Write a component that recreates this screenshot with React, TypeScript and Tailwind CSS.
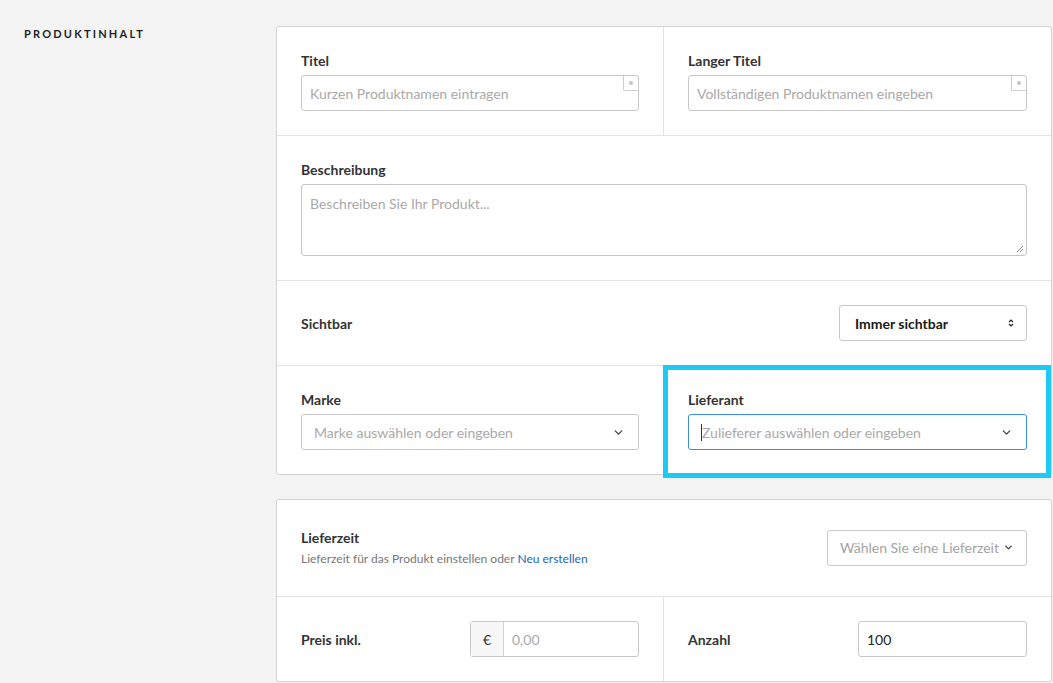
import { ChevronDown } from 'lucide-react';

function Label({ children }: { children: React.ReactNode }) {
  return <div className="text-[14px] leading-5 font-bold text-[#333] mb-[4px] pt-px">{children}</div>;
}

function TextInput({ placeholder }: { placeholder: string }) {
  return (
    <div className="relative h-9 border border-[#c8c8c8] rounded-[3px] bg-white flex items-center pl-[8px]">
      <span className="text-[14px] text-[#a9a9a9]">{placeholder}</span>
      {/* little field badge */}
      <div className="absolute top-0 right-0 w-[15px] h-[15px] border-l border-b border-[#cfcfcf] rounded-bl-[2px] flex items-center justify-center">
        <div className="w-[4px] h-[4px] rounded-full bg-[#c4c4c4]" />
      </div>
    </div>
  );
}

function Combo({ placeholder, active }: { placeholder: string; active?: boolean }) {
  return (
    <div
      className={
        active
          ? 'h-9 border border-[#3d8fd8] rounded-[3px] bg-white flex items-center pl-[12px] pr-[13px]'
          : 'h-9 border border-[#c8c8c8] rounded-[3px] bg-white flex items-center pl-[12px] pr-[13px]'
      }
    >
      {active && <span className="w-px h-[17px] bg-[#333]" />}
      <span className="flex-1 text-[14px] text-[#a9a9a9]">{placeholder}</span>
      <ChevronDown className="w-[13px] h-[13px] text-[#444]" strokeWidth={2.5} />
    </div>
  );
}

export default function App() {
  return (
    <div className="min-h-[683px] bg-[#f3f3f3] font-['Lato','Open_Sans',sans-serif] text-[#333]">
      <div className="flex pt-[26px]">
        {/* Section label */}
        <div className="w-[276px] pl-[24px]">
          <div className="text-[11px] leading-4 font-bold tracking-[0.2em] text-[#1f1f1f]">PRODUKTINHALT</div>
        </div>

        <div className="w-[776px] flex flex-col gap-[24px]">
          {/* Card 1 */}
          <div className="bg-white border border-[#d3d3d3] rounded-[3px]">
            <div className="grid grid-cols-2 border-b border-[#e3e3e3]">
              <div className="px-6 pt-[23px] pb-6 border-r border-[#e3e3e3]">
                <Label>Titel</Label>
                <TextInput placeholder="Kurzen Produktnamen eintragen" />
              </div>
              <div className="px-6 pt-[23px] pb-6">
                <Label>Langer Titel</Label>
                <TextInput placeholder="Vollständigen Produktnamen eingeben" />
              </div>
            </div>

            <div className="px-6 pt-[23px] pb-6 border-b border-[#e3e3e3]">
              <Label>Beschreibung</Label>
              <div className="relative h-[72px] border border-[#c8c8c8] rounded-[3px] pl-[8px] pt-[6px]">
                <span className="text-[14px] text-[#a9a9a9]">Beschreiben Sie Ihr Produkt...</span>
                <svg className="absolute right-[2px] bottom-[2px]" width="8" height="8" viewBox="0 0 8 8">
                  <path d="M7 1 L1 7 M7 4 L4 7" stroke="#888" strokeWidth="1" />
                </svg>
              </div>
            </div>

            <div className="flex items-center justify-between pl-6 pr-6 pt-6 pb-6 border-b border-[#e3e3e3]">
              <span className="text-[14px] font-bold text-[#333]">Sichtbar</span>
              <div className="w-[188px] h-9 border border-[#c8c8c8] rounded-[3px] flex items-center pl-[15px] pr-[12px]">
                <span className="flex-1 text-[14px] font-bold text-[#1a1a1a]">Immer sichtbar</span>
                <svg width="6" height="8" viewBox="0 0 6 8">
                  <path d="M1 3 L3 1 L5 3 M1 5 L3 7 L5 5" stroke="#222" strokeWidth="1.2" fill="none" />
                </svg>
              </div>
            </div>

            <div className="grid grid-cols-2">
              <div className="px-6 pt-[23px] pb-6 border-r border-[#e3e3e3]">
                <Label>Marke</Label>
                <Combo placeholder="Marke auswählen oder eingeben" />
              </div>
              <div className="relative px-6 pt-[23px] pb-6">
                <Label>Lieferant</Label>
                <Combo placeholder="Zulieferer auswählen oder eingeben" active />
                {/* highlight overlay */}
                <div className="absolute -left-px -top-px right-0 -bottom-[4px] border-[5px] border-[#1dc9f5] pointer-events-none" />
              </div>
            </div>
          </div>

          {/* Card 2 */}
          <div className="bg-white border border-[#d3d3d3] rounded-[3px]">
            <div className="flex items-center justify-between px-6 pt-[28px] pb-[29px] border-b border-[#e3e3e3]">
              <div>
                <div className="text-[14px] leading-5 font-bold text-[#333]">Lieferzeit</div>
                <div className="text-[12px] leading-4 mt-[3px] text-[#777]">
                  Lieferzeit für das Produkt einstellen oder <span className="text-[#1a66c9]">Neu erstellen</span>
                </div>
              </div>
              <div className="w-[200px] h-9 border border-[#c8c8c8] rounded-[3px] flex items-center pl-[12px] pr-[12px]">
                <span className="flex-1 text-[14px] text-[#a3a3a3]">Wählen Sie eine Lieferzeit</span>
                <ChevronDown className="w-[11px] h-[11px] text-[#444]" strokeWidth={3} />
              </div>
            </div>

            <div className="grid grid-cols-2">
              <div className="flex items-center justify-between px-6 pt-6 pb-6 border-r border-[#e3e3e3]">
                <span className="text-[14px] font-bold text-[#333]">Preis inkl.</span>
                <div className="w-[169px] h-9 border border-[#c8c8c8] rounded-[3px] flex">
                  <div className="w-[33px] bg-[#f7f7f7] border-r border-[#d3d3d3] flex items-center justify-center text-[14px] text-[#333]">
                    €
                  </div>
                  <div className="flex-1 flex items-center pl-[8px] text-[14px] text-[#a9a9a9]">0,00</div>
                </div>
              </div>
              <div className="flex items-center justify-between px-6 pt-6 pb-6">
                <span className="text-[14px] font-bold text-[#333]">Anzahl</span>
                <div className="w-[169px] h-9 border border-[#c8c8c8] rounded-[3px] flex items-center pl-[8px] text-[14px] text-[#222]">
                  100
                </div>
              </div>
            </div>
          </div>
        </div>
      </div>
    </div>
  );
}
